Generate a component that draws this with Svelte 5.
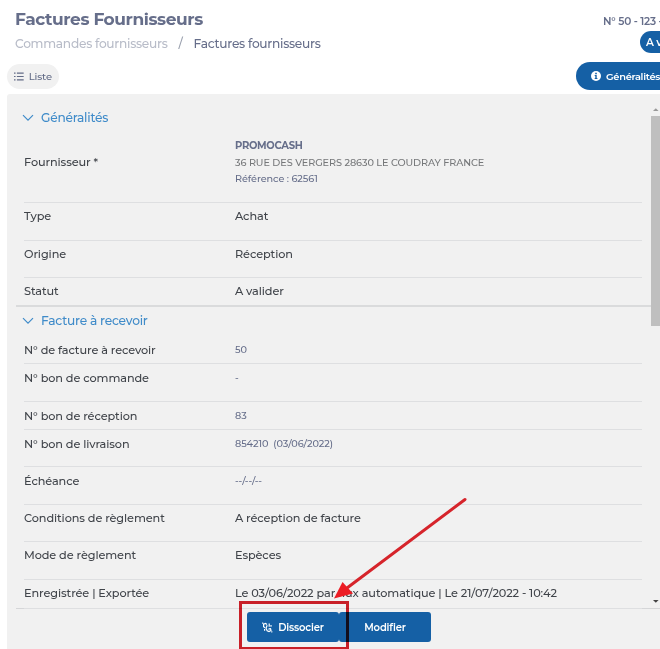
<script>
  const generalites = [
    { label: 'Type', value: 'Achat', height: 38 },
    { label: 'Origine', value: 'Réception', height: 37 },
    { label: 'Statut', value: 'A valider', height: 28, last: true }
  ];

  const facture = [
    { label: 'N° de facture à recevoir', value: '50', height: 28, small: true },
    { label: 'N° bon de commande', value: '-', height: 38, small: true },
    { label: 'N° bon de réception', value: '83', height: 28, small: true },
    { label: 'N° bon de livraison', value: '854210  (03/06/2022)', height: 37, small: true },
    { label: 'Échéance', value: '--/--/--', height: 38, small: true },
    { label: 'Conditions de règlement', value: 'A réception de facture', height: 37 },
    { label: 'Mode de règlement', value: 'Espèces', height: 38 },
    { label: 'Enregistrée | Exportée', value: 'Le 03/06/2022 par flux automatique | Le 21/07/2022 - 10:42', height: 29 }
  ];
</script>

{#snippet ligne(row)}
  <div class="row" class:last={row.last} class:small={row.small} style="height: {row.height}px">
    <span class="label">{row.label}</span>
    <span class="value">{row.value}</span>
  </div>
{/snippet}

{#snippet titre(text)}
  <h2>
    <svg width="12" height="8" viewBox="0 0 12 8"><path d="M1 1.2 6 6.2 11 1.2" /></svg>
    <span>{text}</span>
  </h2>
{/snippet}

<div class="page">
  <header>
    <div>
      <h1>Factures Fournisseurs</h1>
      <nav>
        <a class="parent" href="#commandes">Commandes fournisseurs</a>
        <span class="sep">/</span>
        <a href="#factures">Factures fournisseurs</a>
      </nav>
    </div>
    <div class="numero">
      <strong>N° 50 - 123 -</strong>
      <span class="badge">A v</span>
    </div>
  </header>

  <div class="tabs">
    <button class="liste">
      <svg width="10" height="9" viewBox="0 0 10 9">
        <path d="M0 1h1.6M0 4.5h1.6M0 8h1.6M3 1h7M3 4.5h7M3 8h7" />
      </svg>
      <span>Liste</span>
    </button>
    <button class="infos">
      <svg width="10" height="10" viewBox="0 0 10 10">
        <circle cx="5" cy="5" r="5" />
        <path d="M4.2 1.7h1.6v1.5H4.2zM3.7 4.1h2v2.9h.7v1H3.7V7h.6V5h-.6z" />
      </svg>
      <span>Généralités</span>
    </button>
  </div>

  <main>
    <div class="scroll">
      <div class="content">
        <section class="premiere">
          {@render titre('Généralités')}
          <div class="row fournisseur">
            <span class="label">Fournisseur *</span>
            <div class="adresse">
              <strong>PROMOCASH</strong>
              <span class="rue">36 RUE DES VERGERS 28630 LE COUDRAY FRANCE</span>
              <span class="ref">Référence : 62561</span>
            </div>
          </div>
          {#each generalites as row}
            {@render ligne(row)}
          {/each}
        </section>
        <section class="seconde">
          {@render titre('Facture à recevoir')}
          {#each facture as row}
            {@render ligne(row)}
          {/each}
        </section>
      </div>
      <div class="scrollbar">
        <svg width="9" height="13" viewBox="0 0 9 13"><path fill="#999" d="M2 8 4.8 5.2 7.6 8z" /></svg>
        <div class="thumb"></div>
        <svg class="bas" width="9" height="13" viewBox="0 0 9 13"><path fill="#444" d="M2 5 4.8 7.8 7.6 5z" /></svg>
      </div>
    </div>
    <footer>
      <button class="dissocier">
        <svg width="11" height="11" viewBox="0 0 11 11">
          <path d="M5 2.4 3.6 1.4 1.6 2.2 1.6 4.6 3 5.8M5.2 3.2 4 6.2 5.2 8.8 7 9.6 9 8.4 8.4 6.2M7.2 1.6v3.2M6.4 7.2l1.6-.6M2.6 7v1.8M9 3v1.8M.3.8l.9.6M9.4 9.6l.9.6" />
        </svg>
        <span>Dissocier</span>
      </button>
      <button class="modifier">Modifier</button>
    </footer>
  </main>

  <div class="cadre"></div>
  <svg class="fleche" width="140" height="110" viewBox="0 0 140 110">
    <path class="trait" d="M134 4.5 16 93" />
    <path class="pointe" d="M3 103.5 11.5 87 22 98.5z" />
  </svg>
</div>

<style>
  .page {
    position: relative;
    width: 660px;
    height: 649px;
    overflow: hidden;
    background: #fff;
    color: #40444a;
    font-family: Montserrat, Inter, sans-serif;
    white-space: nowrap;
  }
  header {
    display: flex;
    justify-content: space-between;
    height: 62px;
    padding-left: 15px;
    box-sizing: border-box;
    color: #666e8a;
  }
  h1 {
    margin: 9px 0 0;
    font-size: 17px;
    line-height: 21px;
    font-weight: 700;
    letter-spacing: -0.42px;
  }
  nav {
    display: flex;
    margin-top: 5px;
    font-size: 12.2px;
    line-height: 17px;
    font-weight: 500;
    letter-spacing: -0.27px;
  }
  nav a {
    color: #666e8a;
    text-decoration: none;
  }
  nav .parent {
    color: #b8bcc8;
  }
  .sep {
    width: 26px;
    text-align: center;
    color: #9aa0ae;
  }
  .numero {
    width: 57px;
    padding-top: 14px;
    font-size: 10.5px;
    line-height: 15px;
    letter-spacing: -0.2px;
  }
  .numero strong {
    font-weight: 600;
  }
  .badge {
    display: block;
    width: 70px;
    height: 22px;
    margin: 2px 0 0 37px;
    padding-left: 6px;
    border-radius: 11px;
    background: #1560a5;
    color: #fff;
    line-height: 23px;
    font-weight: 600;
  }
  .tabs {
    display: flex;
    justify-content: space-between;
    height: 32px;
    padding-left: 7px;
  }
  button {
    display: flex;
    align-items: center;
    border: 0;
    font-family: inherit;
    font-size: 10px;
  }
  .liste {
    width: 52px;
    height: 25px;
    margin-top: 2px;
    padding: 0 7px;
    gap: 5px;
    border-radius: 13px;
    background: #f1f1f1;
    color: #626b86;
    font-weight: 500;
    letter-spacing: -0.1px;
  }
  .liste path {
    fill: none;
    stroke: #626b86;
    stroke-width: 1.2;
  }
  .infos {
    width: 84px;
    height: 28px;
    padding: 0 0 0 15px;
    gap: 5px;
    border-radius: 14px 0 0 14px;
    background: #1560a5;
    color: #fff;
    font-weight: 600;
    font-size: 9.8px;
    letter-spacing: -0.25px;
  }
  .infos svg {
    flex: none;
  }
  .infos circle {
    fill: #fff;
  }
  .infos path {
    fill: #1560a5;
  }
  main {
    height: 555px;
    margin-left: 7px;
    padding: 9px 0 0 9px;
    box-sizing: border-box;
    border-radius: 3px 0 0 0;
    background: #f1f1f1;
  }
  .scroll {
    display: flex;
    height: 505px;
    border-bottom: 1px solid #d5d6d8;
  }
  .content {
    flex: 1;
  }
  .premiere {
    height: 202px;
    border-bottom: 2px solid #dadbdc;
  }
  h2 {
    display: flex;
    align-items: center;
    gap: 7px;
    height: 29px;
    margin: 0;
    padding: 0 0 2px 6px;
    box-sizing: border-box;
    color: #3f8bc9;
    font-size: 12.2px;
    font-weight: 500;
    letter-spacing: -0.22px;
  }
  .premiere h2 {
    padding-bottom: 0;
  }
  h2 path {
    fill: none;
    stroke: #3f8bc9;
    stroke-width: 1.2;
  }
  .row {
    display: grid;
    grid-template-columns: 211px 1fr;
    box-sizing: border-box;
    margin: 0 9px 0 8px;
    border-bottom: 1px solid #dedfe1;
    font-size: 11.3px;
    line-height: 27px;
    font-weight: 500;
    letter-spacing: -0.1px;
  }
  .row.last {
    border-bottom: 0;
  }
  .fournisseur {
    height: 71px;
  }
  .fournisseur .label {
    line-height: 61px;
  }
  .adresse {
    display: flex;
    flex-direction: column;
    padding-top: 6px;
    font-size: 9.7px;
    line-height: 16.5px;
    letter-spacing: -0.08px;
    color: #666e8a;
  }
  .adresse strong {
    font-size: 10px;
    font-weight: 700;
    letter-spacing: -0.3px;
  }
  .rue {
    color: #757779;
  }
  .small {
    line-height: 28px;
  }
  .small .value {
    color: #666e8a;
    font-size: 9.7px;
    white-space: pre;
  }
  .scrollbar {
    display: flex;
    flex-direction: column;
    width: 9px;
  }
  .thumb {
    height: 210px;
    background: #bfbfbf;
  }
  .bas {
    margin-top: auto;
  }
  footer {
    display: flex;
    padding: 3px 0 0 231px;
  }
  footer button {
    height: 30px;
    justify-content: center;
    border-radius: 3px;
    background: #1560a5;
    color: #fff;
    font-weight: 600;
    letter-spacing: -0.15px;
  }
  .dissocier {
    width: 92px;
    padding: 0;
    gap: 5px;
  }
  .dissocier path {
    fill: none;
    stroke: #fff;
    stroke-width: 1.2;
  }
  .modifier {
    width: 92px;
    padding: 0;
  }
  /* annotation rouge posée sur la page */
  .cadre {
    position: absolute;
    left: 239px;
    top: 601px;
    width: 104px;
    height: 43px;
    border: 3px solid #d4212a;
    mix-blend-mode: multiply;
  }
  .fleche {
    position: absolute;
    left: 331px;
    top: 495px;
  }
  .trait {
    fill: none;
    stroke: #d6242b;
    stroke-width: 3;
    stroke-linecap: round;
  }
  .pointe {
    fill: #ec1c24;
  }
</style>
